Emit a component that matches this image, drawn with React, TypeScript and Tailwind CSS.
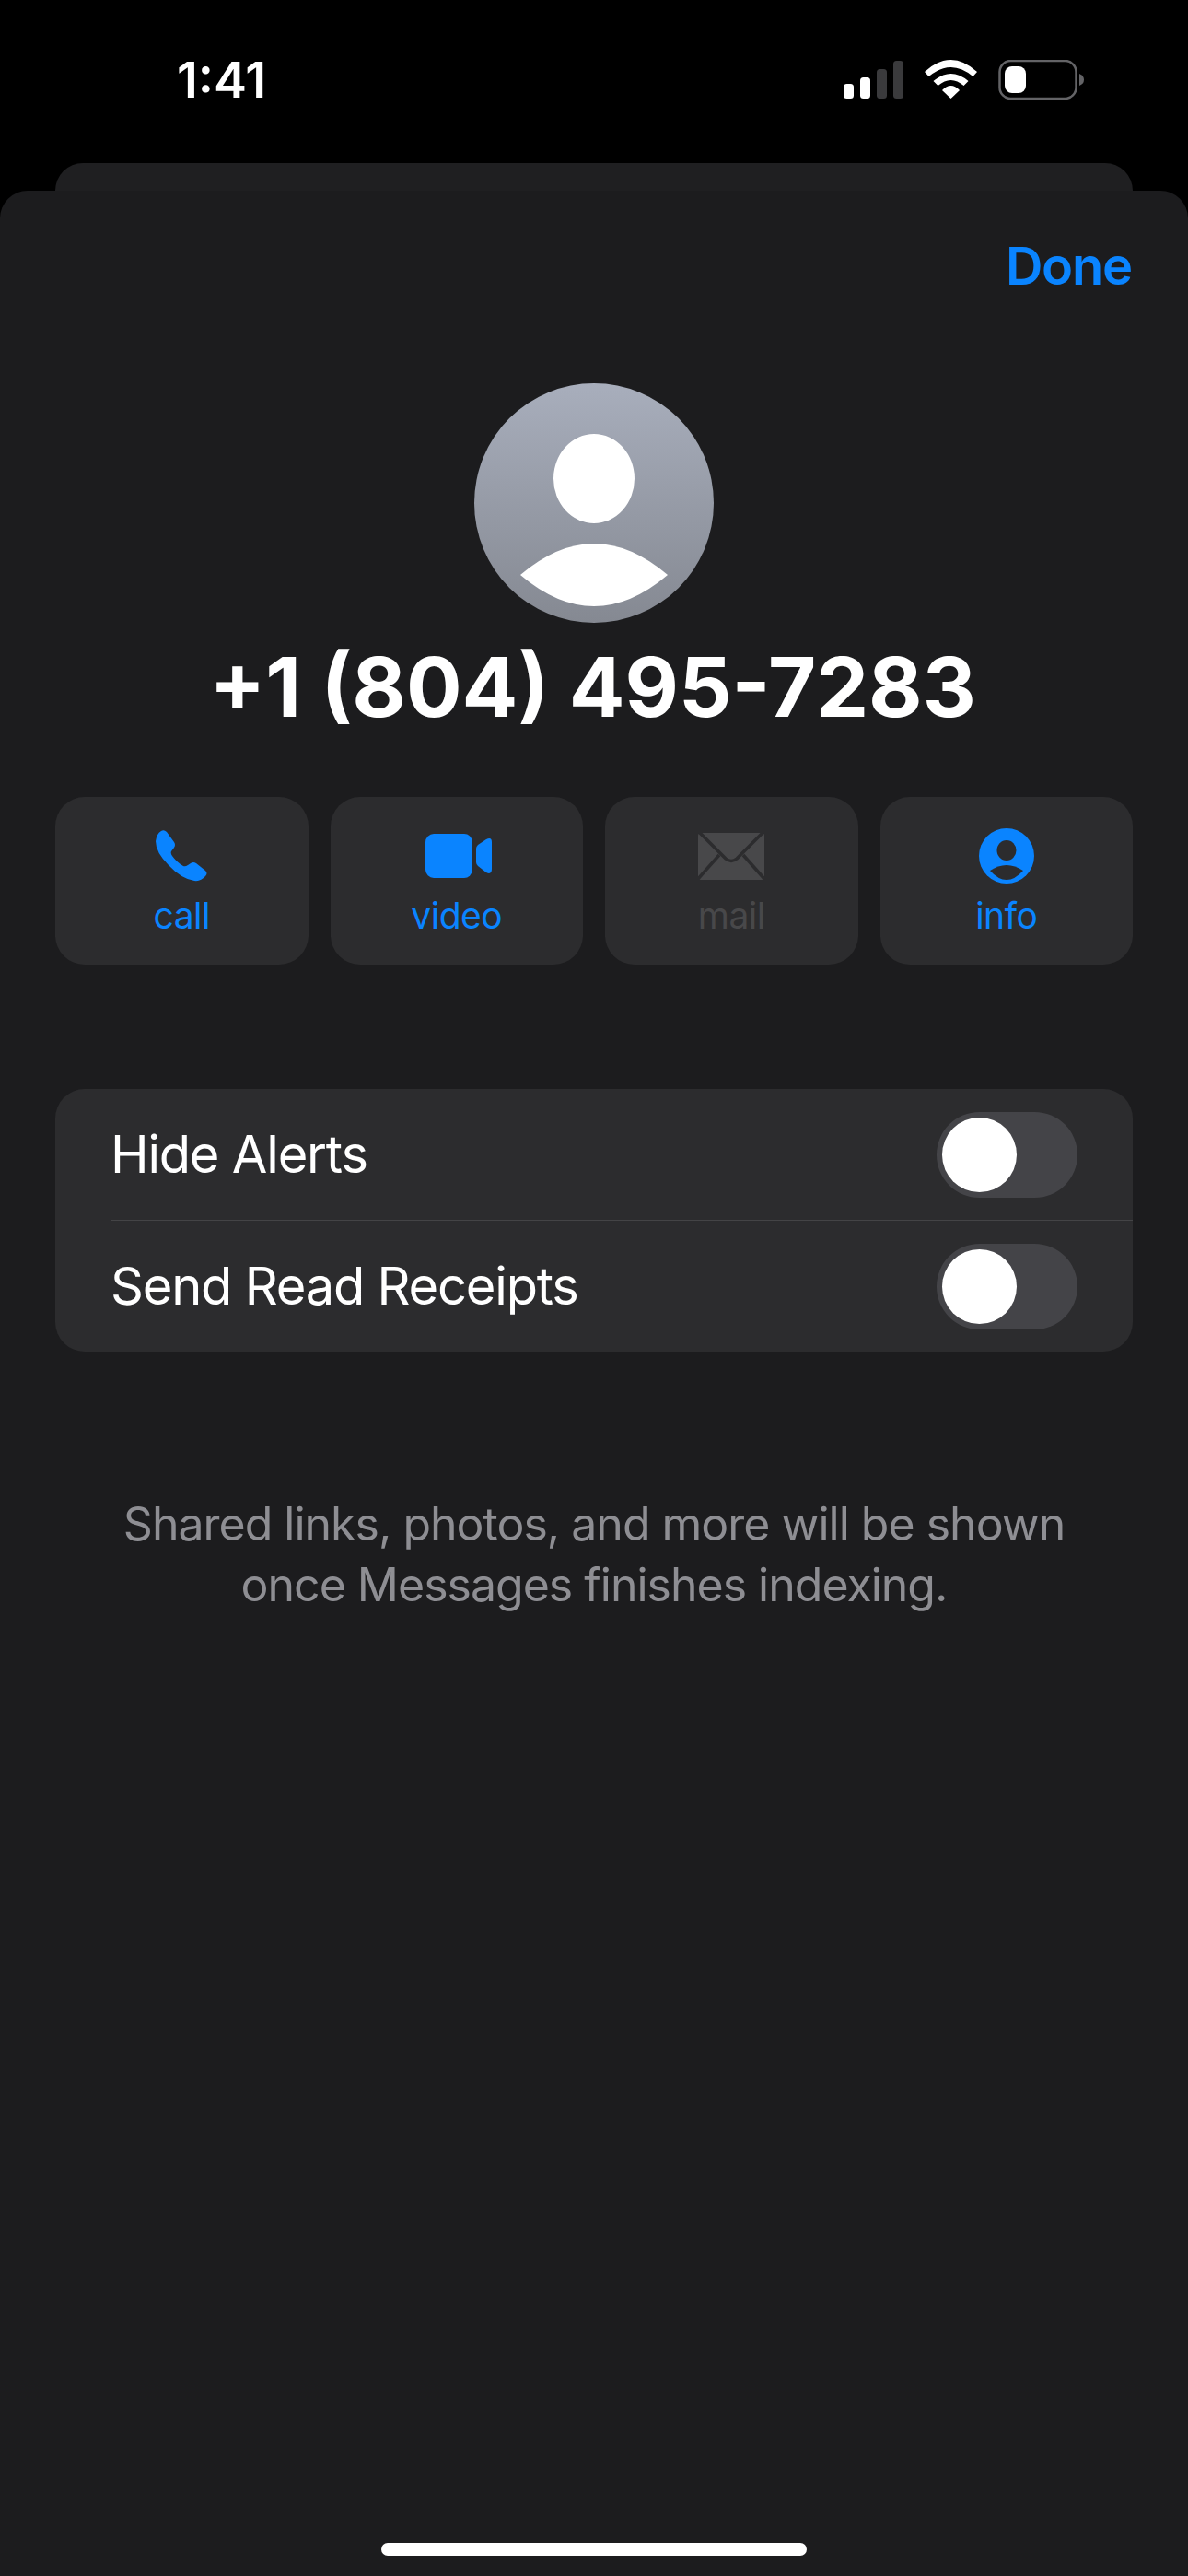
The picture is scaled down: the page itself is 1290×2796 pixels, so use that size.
import { ReactNode } from 'react';

function StatusIcons() {
  return (
    <svg width="261" height="43" viewBox="0 0 261 43" className="block">
      <rect x="0" y="26" width="11" height="16" rx="3.5" fill="#fff" />
      <rect x="18" y="19" width="11" height="23" rx="3.5" fill="#fff" />
      <rect x="36" y="10" width="11" height="32" rx="3.5" fill="#3a3a3c" />
      <rect x="54" y="1" width="11" height="41" rx="3.5" fill="#3a3a3c" />
      <g transform="translate(88 0)" fill="#fff">
        <path d="M0 13 Q28.5 -13 57 13 L52.5 18 Q28.5 -2 4.5 18 Z" />
        <path d="M9.5 23 Q28.5 7 47.5 23 L42.5 28 Q28.5 16 14.5 28 Z" />
        <path d="M19 33 Q28.5 23 38 33 L28.5 42 Z" />
      </g>
      <rect x="169.5" y="1" width="83" height="41" rx="12" fill="none" stroke="#636366" strokeWidth="2.5" />
      <rect x="175" y="7" width="23" height="29" rx="8" fill="#fff" />
      <path d="M256 15 Q261 17 261 21.5 Q261 26 256 28 Z" fill="#636366" />
    </svg>
  );
}

function PhoneIcon() {
  return (
    <svg width="56" height="56" viewBox="0 0 56 56">
      <path
        d="M6 1 Q9 -1 12 2 L20 13 Q22 16 20 19 L17 23 Q16 25 18 28 Q23 35 30 39 Q32 40 35 38 L38 36 Q41 34 44 36 L54 44 Q57 47 54 50 Q49 56 42 55 Q28 53 14 38 Q0 24 0 12 Q1 4 6 1 Z"
        fill="#0a84ff"
      />
    </svg>
  );
}

function VideoIcon() {
  return (
    <svg width="72" height="48" viewBox="0 0 72 48" className="ml-[5px]">
      <rect x="0" y="0" width="51" height="48" rx="9" fill="#0a84ff" />
      <path d="M55 16 Q55 14 57 12 L66 6 Q72 3 72 9 L72 38 Q72 45 66 42 L57 35 Q55 33 55 31 Z" fill="#0a84ff" />
    </svg>
  );
}

function MailIcon() {
  return (
    <svg width="72" height="51" viewBox="0 0 72 51">
      <rect x="0" y="0" width="72" height="51" rx="3" fill="#48484a" />
      <path
        d="M1 -1 L30 28 Q36 33 42 28 L71 -1 M0 50 L23 24 M72 50 L49 24"
        fill="none"
        stroke="#2c2c2e"
        strokeWidth="3.5"
      />
    </svg>
  );
}

function InfoIcon() {
  return (
    <svg width="60" height="60" viewBox="0 0 60 60">
      <circle cx="30" cy="30" r="30" fill="#0a84ff" />
      <ellipse cx="30" cy="24" rx="10.5" ry="11" fill="#2c2c2e" />
      <path d="M12 46 Q30 34 48 46 Q30 66 12 46 Z" fill="#2c2c2e" />
    </svg>
  );
}

function ActionButton({ icon, label, disabled }: { icon: ReactNode; label: string; disabled?: boolean }) {
  return (
    <div className="h-[182px] rounded-[32px] bg-[#2c2c2e] flex flex-col items-center">
      <div className="h-[60px] mt-[34px] flex items-center justify-center">{icon}</div>
      <span
        className={`mt-[10px] text-[39px] leading-[50px] tracking-[-0.5px] ${
          disabled ? 'text-[#48484a]' : 'text-[#0a84ff]'
        }`}
      >
        {label}
      </span>
    </div>
  );
}

function ToggleRow({ label }: { label: string }) {
  return (
    <div className="h-[142px] pl-[60px] pr-[60px] flex items-center justify-between">
      <span className="text-[56px] leading-[68px] tracking-[-1.2px] text-white">{label}</span>
      <div className="w-[153px] h-[93px] rounded-full bg-[#444448] pl-[6px] flex items-center">
        <div className="w-[81px] h-[81px] rounded-full bg-white" />
      </div>
    </div>
  );
}

export default function App() {
  return (
    <div className="w-[1290px] h-[2796px] bg-black flex flex-col overflow-hidden font-['Inter',sans-serif]">
      {/* Status bar */}
      <div className="h-[177px] flex items-start justify-between pl-[192px] pr-[113px] pt-[65px]">
        <span className="text-[54px] leading-[44px] font-semibold text-white">1:41</span>
        <StatusIcons />
      </div>

      {/* Sheet behind */}
      <div className="h-[30px] mx-[60px] rounded-t-[30px] bg-[#1f1f21]" />

      {/* Sheet */}
      <div className="flex-1 rounded-t-[30px] bg-[#1c1c1e] flex flex-col items-center">
        <div className="w-full flex justify-end pr-[61px] pt-[52px]">
          <span className="text-[56px] leading-[60px] font-semibold tracking-[-1.2px] text-[#0a84ff]">Done</span>
        </div>

        {/* Avatar */}
        <div className="mt-[97px] w-[260px] h-[260px] rounded-full bg-linear-to-b from-[#a8aebc] to-[#858992]">
          <svg width="260" height="260" viewBox="0 0 260 260" className="block">
            <ellipse cx="130" cy="103.5" rx="44" ry="48.5" fill="#fff" />
            <path d="M50 208 Q130 140 210 208 Q130 276 50 208 Z" fill="#fff" />
          </svg>
        </div>

        <h1 className="mt-[17px] pr-[3px] text-[90px] leading-[106px] font-bold text-white">+1 (804) 495-7283</h1>

        {/* Actions */}
        <div className="mt-[66px] w-full px-[60px] grid grid-cols-4 gap-[24px]">
          <ActionButton icon={<PhoneIcon />} label="call" />
          <ActionButton icon={<VideoIcon />} label="video" />
          <ActionButton icon={<MailIcon />} label="mail" disabled />
          <ActionButton icon={<InfoIcon />} label="info" />
        </div>

        {/* Settings */}
        <div className="mt-[135px] w-[1170px] rounded-[32px] bg-[#2c2c2e]">
          <ToggleRow label="Hide Alerts" />
          <div className="ml-[60px] h-[1px] bg-[#444446]" />
          <ToggleRow label="Send Read Receipts" />
        </div>

        <p className="mt-[154px] text-center text-[50px] leading-[66px] tracking-[-1px] text-[#8e8e93]">
          Shared links, photos, and more will be shown
          <br />
          once Messages finishes indexing.
        </p>

        <div className="mt-auto mb-[22px] w-[462px] h-[14px] rounded-full bg-white" />
      </div>
    </div>
  );
}
